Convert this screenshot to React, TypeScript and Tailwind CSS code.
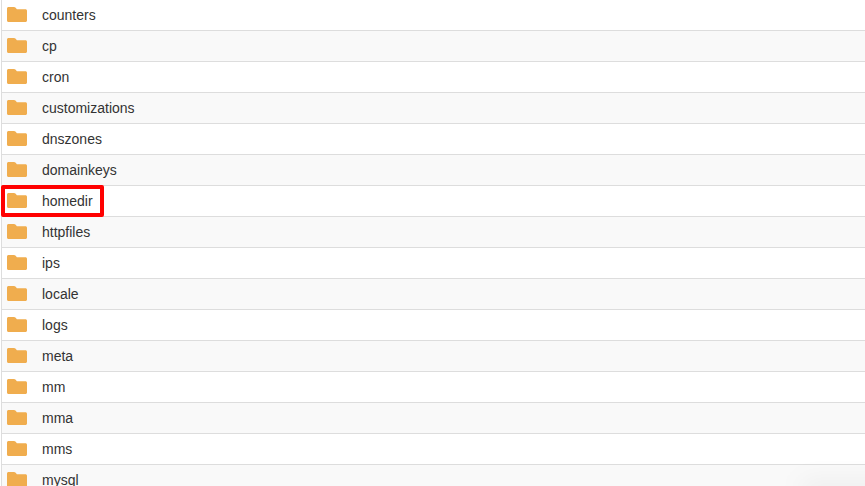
const folders = [
  'counters',
  'cp',
  'cron',
  'customizations',
  'dnszones',
  'domainkeys',
  'homedir',
  'httpfiles',
  'ips',
  'locale',
  'logs',
  'meta',
  'mm',
  'mma',
  'mms',
  'mysql',
]

function FolderIcon() {
  return (
    <svg width="20" height="16" viewBox="0 0 20 16" className="shrink-0">
      <path
        d="M1.500 0h5.500c.6 0 1 .2 1.400.6l1.500 1.700h8.600c.8 0 1.500.7 1.500 1.500v9.700c0 .8-.7 1.500-1.500 1.500h-17C.7 15 0 14.300 0 13.500V1.500C0 .7.7 0 1.500 0z"
        fill="#f0ad4e"
      />
    </svg>
  )
}

export default function App() {
  return (
    <div className="relative h-[486px] w-[865px] overflow-hidden bg-white font-['Liberation_Sans',Arial,sans-serif] text-[14px] text-[#333]">
      <div className="ml-px border-l border-l-[#ddd]">
        {folders.map((name, i) => (
          <div
            key={name}
            className={`flex h-[31px] items-center border-b border-b-[#ddd] pl-[5px] ${i % 2 === 1 ? 'bg-[#f9f9f9]' : 'bg-white'}`}
          >
            <FolderIcon />
            <span className="ml-[15px]">{name}</span>
          </div>
        ))}
      </div>
      {/* annotation round the homedir row */}
      <div className="absolute left-px top-[185px] h-[32px] w-[103px] rounded-[2px] border-4 border-[#f00]" />
      {/* faint shadow creeping in at the bottom right */}
      <div className="absolute left-[800px] top-[481px] h-[20px] w-[100px] rounded-full bg-black/5 blur-md" />
    </div>
  )
}
